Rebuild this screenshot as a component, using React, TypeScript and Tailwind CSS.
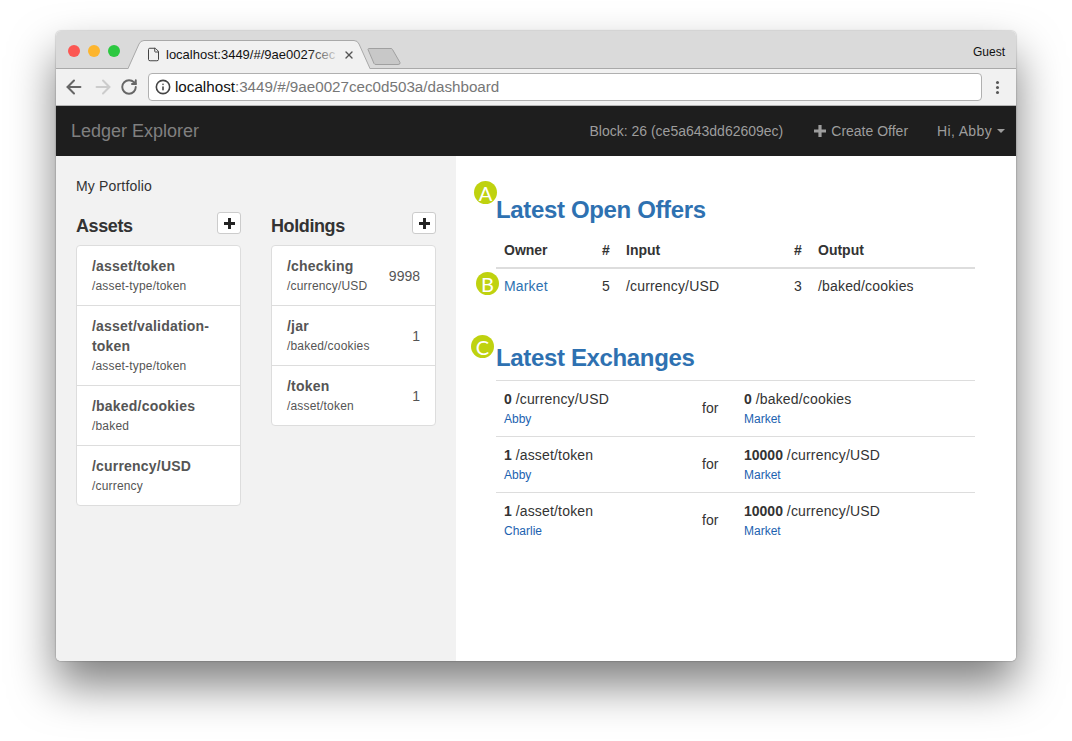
import { ArrowLeft, ArrowRight, File, Info, RotateCw, X } from 'lucide-react';

const assets = [
  { name: '/asset/token', type: '/asset-type/token' },
  { name: '/asset/validation-token', type: '/asset-type/token' },
  { name: '/baked/cookies', type: '/baked' },
  { name: '/currency/USD', type: '/currency' },
];

const holdings = [
  { name: '/checking', type: '/currency/USD', qty: 9998 },
  { name: '/jar', type: '/baked/cookies', qty: 1 },
  { name: '/token', type: '/asset/token', qty: 1 },
];

const exchanges = [
  { inQty: 0, input: '/currency/USD', buyer: 'Abby', outQty: 0, output: '/baked/cookies', seller: 'Market' },
  { inQty: 1, input: '/asset/token', buyer: 'Abby', outQty: 10000, output: '/currency/USD', seller: 'Market' },
  { inQty: 1, input: '/asset/token', buyer: 'Charlie', outQty: 10000, output: '/currency/USD', seller: 'Market' },
];

function PlusGlyph({ className }: { className: string }) {
  return (
    <svg viewBox="0 0 12 12" className={className} fill="currentColor">
      <path d="M4.4 0h3.2v4.4H12v3.2H7.6V12H4.4V7.6H0V4.4h4.4z" />
    </svg>
  );
}

function Badge({ letter, className }: { letter: string; className: string }) {
  return (
    <div className={`absolute flex h-[23px] w-[23px] items-center justify-center rounded-full bg-[#bfd20f] font-['Lato',sans-serif] text-[20px] font-normal tracking-normal text-white ${className}`}>
      {letter}
    </div>
  );
}

function ColumnHeader({ title }: { title: string }) {
  return (
    <div className="flex h-[33px] items-start justify-between">
      <h3 className="text-[18px] font-bold leading-[28px] tracking-[-0.4px] text-[#333]">{title}</h3>
      <button className="flex h-[22px] w-[24px] items-center justify-center rounded-[3px] border border-[#ccc] bg-white text-[#222]">
        <PlusGlyph className="h-[11px] w-[11px]" />
      </button>
    </div>
  );
}

function BrowserChrome() {
  return (
    <>
      <div className="flex h-[38px] border-b border-[#a9a9a9] bg-[#dadada]">
        <div className="ml-[12px] mt-[14px] flex gap-[8px] self-start">
          <div className="h-[12px] w-[12px] rounded-full bg-[#fc5753]" />
          <div className="h-[12px] w-[12px] rounded-full bg-[#fdb52e]" />
          <div className="h-[12px] w-[12px] rounded-full bg-[#2cc840]" />
        </div>
        <div className="relative ml-[8px] mt-[9px] flex h-[29px] w-[242px] items-center pl-[18px]">
          <svg viewBox="0 0 242 29" className="absolute inset-0 h-[29px] w-[242px]">
            <path d="M0 29 L11 4 Q12.5 .5 16 .5 L226 .5 Q229.5 .5 231 4 L242 29 Z" fill="#f1f1f1" stroke="none" />
            <path d="M0 28.5 L11 4 Q12.5 .5 16 .5 L226 .5 Q229.5 .5 231 4 L242 28.5" fill="none" stroke="#a9a9a9" />
          </svg>
          <File className="relative h-[17px] w-[15px] text-[#444]" strokeWidth={1.6} />
          <div className="relative ml-[5px] w-[174px] overflow-hidden whitespace-nowrap text-[13px] leading-[18px] text-[#111]">
            localhost:3449/#/9ae0027cec
            <div className="absolute inset-y-0 right-0 w-[32px] bg-gradient-to-r from-transparent to-[#f1f1f1]" />
          </div>
          <X className="relative ml-[3px] h-[12px] w-[12px] text-[#555]" strokeWidth={2.8} />
        </div>
        <svg viewBox="0 0 34 17" className="ml-[-3px] mt-[17px] h-[17px] w-[34px]">
          <path d="M1 1.5 Q1 .5 2 .5 L24 .5 Q25 .5 25.5 1.5 L33 14.5 Q33.5 16.5 31 16.5 L9 16.5 Q7.5 16.5 7 15.5 Z" fill="#c8c8c8" stroke="#a0a0a0" />
        </svg>
        <div className="ml-auto mr-[11px] mt-[13px] text-[12px] leading-[16px] text-[#111]">Guest</div>
      </div>
      <div className="flex h-[37px] items-center border-b border-[#b5b5b5] bg-[#f1f1f1]">
        <ArrowLeft className="ml-[7px] h-[22px] w-[22px] text-[#666]" strokeWidth={2.2} />
        <ArrowRight className="ml-[7px] h-[22px] w-[22px] text-[#ccc]" strokeWidth={2.2} />
        <RotateCw className="ml-[6px] h-[18px] w-[18px] text-[#666]" strokeWidth={2.6} />
        <div className="ml-[10px] flex h-[28px] w-[834px] items-center rounded-[4px] border border-[#b0b0b0] bg-white pl-[6px]">
          <Info className="h-[16px] w-[16px] text-[#444]" strokeWidth={2.4} />
          <span className="ml-[4px] pt-[1px] text-[15.2px] text-[#777]">
            <span className="text-[#111]">localhost</span>:3449/#/9ae0027cec0d503a/dashboard
          </span>
        </div>
        <div className="ml-[14px] flex flex-col gap-[2px]">
          <div className="h-[3px] w-[3px] rounded-full bg-[#555]" />
          <div className="h-[3px] w-[3px] rounded-full bg-[#555]" />
          <div className="h-[3px] w-[3px] rounded-full bg-[#555]" />
        </div>
      </div>
    </>
  );
}

function Navbar() {
  return (
    <nav className="flex h-[50px] items-center bg-[#1e1e1e] pl-[15px] pr-[11px] text-[14px] text-[#9d9d9d]">
      <span className="text-[18px] text-[#808080]">Ledger Explorer</span>
      <span className="ml-auto">Block: 26 (ce5a643dd62609ec)</span>
      <span className="ml-[31px] flex items-center">
        <PlusGlyph className="mr-[5px] h-[12px] w-[12px]" />
        Create Offer
      </span>
      <span className="ml-[29px] tracking-[0.35px]">Hi, Abby</span>
      <span className="ml-[5px] h-0 w-0 border-x-[4.5px] border-t-[4px] border-x-transparent border-t-[#9d9d9d]" />
    </nav>
  );
}

function Sidebar() {
  return (
    <aside className="w-[400px] shrink-0 bg-[#f2f2f2] pl-[20px] pt-[20px] text-[14px] text-[#333]">
      <div className="leading-[20px] tracking-[0.17px]">My Portfolio</div>
      <div className="mt-[16px] flex items-start gap-[30px]">
        <div className="w-[165px]">
          <ColumnHeader title="Assets" />
          <div className="rounded-[4px] border border-[#ddd] bg-white">
            {assets.map((a, i) => (
              <div key={a.name} className={`px-[15px] pt-[10px] pb-[9px] leading-[20px] text-[#555] ${i < assets.length - 1 ? 'border-b border-[#ddd]' : ''}`}>
                <div className="font-bold tracking-[0.2px]">{a.name}</div>
                <div className="text-[12px] tracking-[0.18px]">{a.type}</div>
              </div>
            ))}
          </div>
        </div>
        <div className="w-[165px]">
          <ColumnHeader title="Holdings" />
          <div className="rounded-[4px] border border-[#ddd] bg-white">
            {holdings.map((h, i) => (
              <div key={h.name} className={`flex items-center justify-between px-[15px] pt-[10px] pb-[9px] leading-[20px] text-[#555] ${i < holdings.length - 1 ? 'border-b border-[#ddd]' : ''}`}>
                <div>
                  <div className="font-bold tracking-[0.2px]">{h.name}</div>
                  <div className="text-[12px] tracking-[0.18px]">{h.type}</div>
                </div>
                <div>{h.qty}</div>
              </div>
            ))}
          </div>
        </div>
      </div>
    </aside>
  );
}

function MainPanel() {
  return (
    <main className="relative flex-1 bg-white pl-[40px] pt-[40px] text-[14px] leading-[20px] text-[#333]">
      <Badge letter="A" className="left-[18px] top-[25px]" />
      <Badge letter="B" className="left-[20px] top-[116px]" />
      <Badge letter="C" className="left-[15px] top-[179px]" />

      <div className="w-[479px]">
        <h2 className="text-[24px] font-bold leading-[28px] tracking-[-0.35px] text-[#2e71b1]">Latest Open Offers</h2>
        <div className="mt-[14px] grid h-[31px] grid-cols-[98px_24px_168px_24px_1fr] border-b-2 border-[#ddd] pl-[8px] pt-[2px] font-bold">
          <div>Owner</div>
          <div>#</div>
          <div>Input</div>
          <div>#</div>
          <div>Output</div>
        </div>
        <div className="grid h-[38px] grid-cols-[98px_24px_168px_24px_1fr] pl-[8px] pt-[7px] tracking-[0.17px]">
          <a className="text-[#2e71b1]">Market</a>
          <div>5</div>
          <div>/currency/USD</div>
          <div>3</div>
          <div>/baked/cookies</div>
        </div>

        <h2 className="mt-[37px] text-[24px] font-bold leading-[28px] tracking-[-0.35px] text-[#2e71b1]">Latest Exchanges</h2>
        <div className="mt-[8px]">
          {exchanges.map((x, i) => (
            <div key={i} className="grid h-[56px] grid-cols-[198px_42px_1fr] border-t border-[#ddd] pl-[8px] pt-[8px]">
              <div>
                <div><b>{x.inQty}</b> <span className="tracking-[0.17px]">{x.input}</span></div>
                <a className="block text-[12px] text-[#1c62b0]">{x.buyer}</a>
              </div>
              <div className="mt-[9px]">for</div>
              <div>
                <div><b>{x.outQty}</b> <span className="tracking-[0.17px]">{x.output}</span></div>
                <a className="block text-[12px] text-[#1c62b0]">{x.seller}</a>
              </div>
            </div>
          ))}
        </div>
      </div>
    </main>
  );
}

export default function App() {
  return (
    <div className="h-[741px] w-full overflow-hidden bg-white pl-[56px] pt-[31px] font-['Liberation_Sans',sans-serif]">
      <div className="flex h-[630px] w-[960px] flex-col overflow-hidden rounded-[5px] shadow-[0_24px_45px_0_rgba(0,0,0,0.5),0_0_1px_1px_rgba(0,0,0,0.12)]">
        <BrowserChrome />
        <Navbar />
        <div className="flex flex-1">
          <Sidebar />
          <MainPanel />
        </div>
      </div>
    </div>
  );
}
